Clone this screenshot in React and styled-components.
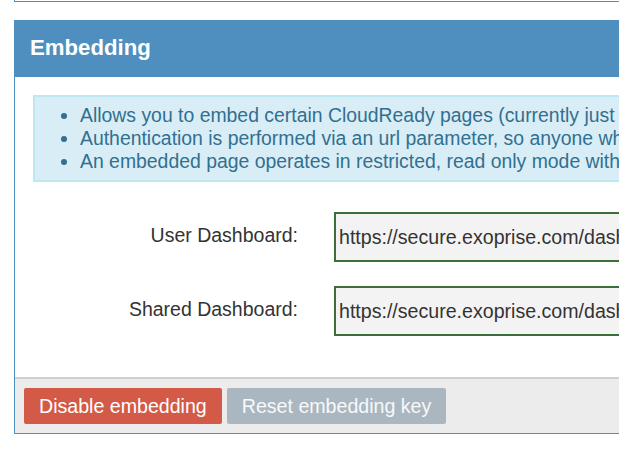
import React from 'react';
import styled, { createGlobalStyle } from 'styled-components';

const GlobalStyle = createGlobalStyle`
  html, body {
    margin: 0;
    padding: 0;
    background: #fff;
    overflow: hidden;
  }
  body {
    font-family: "Liberation Sans", Arial, sans-serif;
  }
`;

const Page = styled.div`
  display: flex;
  flex-direction: column;
  gap: 18px;
  padding-left: 14px;
  width: 800px;
`;

const PrevPanel = styled.div`
  height: 1px;
  border: 1px solid #4f8fc0;
  border-top: none;
`;

const Panel = styled.section`
  border: 1px solid #4f8fc0;
  background: #fff;
`;

const PanelHeader = styled.div`
  display: flex;
  align-items: center;
  height: 56px;
  padding: 0 0 3px 15px;
  box-sizing: border-box;
  background: #4f8fc0;
`;

const Title = styled.h2`
  margin: 0;
  color: #fff;
  font-size: 22.2px;
  font-weight: bold;
`;

const PanelBody = styled.div`
  display: flex;
  flex-direction: column;
  padding: 18px 0 41px 18px;
`;

const InfoBox = styled.ul`
  margin: 0 0 30px 0;
  padding: 7px 0 7px 45px;
  background: #d9edf7;
  border: 2px solid #bce8f1;
  color: #31708f;
  font-size: 19.4px;
  line-height: 23px;
  white-space: nowrap;
`;

const FieldRow = styled.div`
  display: grid;
  grid-template-columns: 265px 1fr;
  column-gap: 36px;
  align-items: center;
  margin-bottom: ${props => (props.last ? '0' : '24px')};
`;

const Label = styled.label`
  text-align: right;
  color: #333;
  font-size: 19.5px;
  padding-bottom: 4px;
`;

const UrlInput = styled.input`
  height: 50px;
  box-sizing: border-box;
  padding: 0 3px;
  border: 2px solid #3a6f3a;
  background: #f3f3f3;
  color: #333;
  font-family: "Liberation Sans", Arial, sans-serif;
  font-size: 19.6px;
  outline: none;
`;

const Footer = styled.div`
  display: flex;
  gap: 5px;
  padding: 9px 9px;
  background: #ececec;
  border-top: 2px solid #cfcfcf;
`;

const Button = styled.button`
  height: 36px;
  padding: 0 15px;
  border: none;
  border-radius: 2px;
  background: ${props => (props.variant === 'danger' ? '#d35a47' : '#aab7c1')};
  color: ${props => (props.variant === 'danger' ? '#fff' : '#f7f9fa')};
  font-family: "Liberation Sans", Arial, sans-serif;
  font-size: 19.6px;
  cursor: pointer;
`;

const urls = {
  user: 'https://secure.exoprise.com/dashboard/embed?key=7f3a91c2e0b44d6f',
  shared: 'https://secure.exoprise.com/dashboard/shared/embed?key=7f3a91c2e0b44d6f',
};

export default function App() {
  return (
    <>
      <GlobalStyle />
      <Page>
        <PrevPanel />
        <Panel>
          <PanelHeader>
            <Title>Embedding</Title>
          </PanelHeader>
          <PanelBody>
            <InfoBox>
              <li>Allows you to embed certain CloudReady pages (currently just dashboards) in other sites.</li>
              <li>Authentication is performed via an url parameter, so anyone who has the url can view the page.</li>
              <li>An embedded page operates in restricted, read only mode without navigation.</li>
            </InfoBox>
            <FieldRow>
              <Label htmlFor="user-dash">User Dashboard:</Label>
              <UrlInput id="user-dash" readOnly value={urls.user} />
            </FieldRow>
            <FieldRow last>
              <Label htmlFor="shared-dash">Shared Dashboard:</Label>
              <UrlInput id="shared-dash" readOnly value={urls.shared} />
            </FieldRow>
          </PanelBody>
          <Footer>
            <Button variant="danger">Disable embedding</Button>
            <Button>Reset embedding key</Button>
          </Footer>
        </Panel>
      </Page>
    </>
  );
}
